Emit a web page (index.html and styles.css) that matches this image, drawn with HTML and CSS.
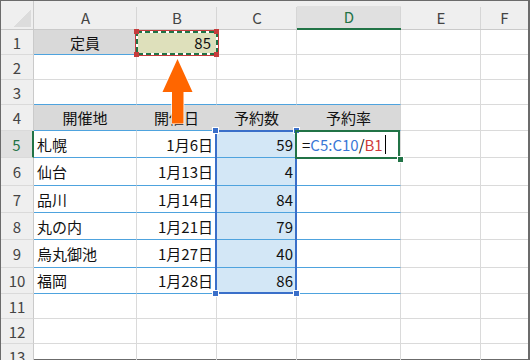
FILE: index.html
```html
<!DOCTYPE html>
<html lang="ja">
<head>
<meta charset="utf-8">
<title>予約率</title>
<link rel="stylesheet" href="styles.css">
</head>
<body>
<div class="frame">
  <div class="sheet">
    <!-- column headers -->
    <div class="corner"></div>
    <div class="ch">A</div>
    <div class="ch">B</div>
    <div class="ch">C</div>
    <div class="ch ch-act">D</div>
    <div class="ch">E</div>
    <div class="ch last">F</div>

    <!-- row 1 -->
    <div class="rh">1</div>
    <div class="c m fill-gray line">定員</div>
    <div class="c r fill-olive">85</div>
    <div class="c"></div><div class="c"></div><div class="c"></div><div class="c last"></div>

    <!-- row 2 -->
    <div class="rh">2</div>
    <div class="c"></div><div class="c"></div><div class="c"></div><div class="c"></div><div class="c"></div><div class="c last"></div>

    <!-- row 3 -->
    <div class="rh">3</div>
    <div class="c line"></div><div class="c line"></div><div class="c line"></div><div class="c line"></div><div class="c"></div><div class="c last"></div>

    <!-- row 4: table header -->
    <div class="rh">4</div>
    <div class="c m fill-gray line">開催地</div>
    <div class="c m fill-gray line">開催日</div>
    <div class="c m fill-gray line">予約数</div>
    <div class="c m fill-gray line keep">予約率</div>
    <div class="c"></div><div class="c last"></div>

    <!-- row 5 -->
    <div class="rh rh-act">5</div>
    <div class="c line">札幌</div>
    <div class="c r line">1月6日</div>
    <div class="c r line fill-blue">59</div>
    <div class="c line edit">=<span class="ref-c">C5:C10</span>/<span class="ref-b">B1</span><span class="caret"></span></div>
    <div class="c"></div><div class="c last"></div>

    <!-- row 6 -->
    <div class="rh">6</div>
    <div class="c line">仙台</div>
    <div class="c r line">1月13日</div>
    <div class="c r line fill-blue">4</div>
    <div class="c line"></div>
    <div class="c"></div><div class="c last"></div>

    <!-- row 7 -->
    <div class="rh">7</div>
    <div class="c line">品川</div>
    <div class="c r line">1月14日</div>
    <div class="c r line fill-blue">84</div>
    <div class="c line"></div>
    <div class="c"></div><div class="c last"></div>

    <!-- row 8 -->
    <div class="rh">8</div>
    <div class="c line">丸の内</div>
    <div class="c r line">1月21日</div>
    <div class="c r line fill-blue">79</div>
    <div class="c line"></div>
    <div class="c"></div><div class="c last"></div>

    <!-- row 9 -->
    <div class="rh">9</div>
    <div class="c line">烏丸御池</div>
    <div class="c r line">1月27日</div>
    <div class="c r line fill-blue">40</div>
    <div class="c line"></div>
    <div class="c"></div><div class="c last"></div>

    <!-- row 10 -->
    <div class="rh">10</div>
    <div class="c line">福岡</div>
    <div class="c r line">1月28日</div>
    <div class="c r line fill-blue">86</div>
    <div class="c line"></div>
    <div class="c"></div><div class="c last"></div>

    <!-- row 11 -->
    <div class="rh">11</div>
    <div class="c"></div><div class="c"></div><div class="c"></div><div class="c"></div><div class="c"></div><div class="c last"></div>

    <!-- row 12 -->
    <div class="rh">12</div>
    <div class="c"></div><div class="c"></div><div class="c"></div><div class="c"></div><div class="c"></div><div class="c last"></div>

    <!-- row 13 (runs past the window edge) -->
    <div class="rh end">13</div>
    <div class="c end"></div><div class="c end"></div><div class="c end"></div><div class="c end"></div><div class="c end"></div><div class="c end last"></div>

    <!-- B1: copied reference (marching ants + red range marker) -->
    <svg class="ants" width="88" height="31" viewBox="0 0 88 31">
      <rect x="2.5" y="2.5" width="83" height="25" fill="none" stroke="#c63c3c" stroke-width="1"/>
      <rect x="4" y="4" width="80" height="22" fill="none" stroke="#ffffff" stroke-width="2"/>
      <rect x="4" y="4" width="80" height="22" fill="none" stroke="#217346" stroke-width="2" stroke-dasharray="5 3"/>
      <rect x="1" y="1" width="5" height="5" fill="#c63c3c"/>
      <rect x="81" y="1" width="5" height="5" fill="#c63c3c"/>
      <rect x="1" y="24" width="5" height="5" fill="#c63c3c"/>
      <rect x="81" y="24" width="5" height="5" fill="#c63c3c"/>
    </svg>

    <!-- C5:C10 reference range -->
    <div class="range">
      <span class="knob tl"></span><span class="knob tr"></span>
      <span class="knob bl"></span><span class="knob br"></span>
    </div>

    <!-- active cell D5 -->
    <div class="active"><span class="handle"></span></div>

    <!-- callout arrow pointing at B1 -->
    <svg class="arrow" width="36" height="72" viewBox="0 0 36 72">
      <polygon points="17.5,3 32.5,36 23.5,36 23.5,67.5 12,67.5 12,36 2.5,36"
               fill="#ff6600" stroke="#ffffff" stroke-width="1.5" stroke-linejoin="miter" paint-order="stroke"/>
    </svg>
  </div>
</div>
</body>
</html>
```

FILE: styles.css
```css
* {
  box-sizing: border-box;
  margin: 0;
  padding: 0;
}

body {
  width: 530px;
  height: 360px;
  overflow: hidden;
  background: #ffffff;
  font-family: "Noto Sans CJK JP", "Noto Sans", sans-serif;
}

.frame {
  width: 530px;
  height: 360px;
  border: 1px solid #6b6b6b;
  border-right-width: 2px;
}

.sheet {
  position: relative;
  height: 100%;
  display: grid;
  grid-template-columns: 33px 103px 80px 80px 104px 80px 1fr;
  grid-template-rows: 29px 25px 25px 25px 26px 27px 28px 27px 27px 28px 26px 25px 25px 1fr;
  font-size: 15px;
  color: #111111;
}

/* header strip */
.corner {
  background:
    linear-gradient(to bottom right, transparent 50%, #dcdcdc 50%) no-repeat 12px 8px / 18px 18px,
    #efefef;
  border-right: 1px solid #cacaca;
  border-bottom: 1px solid #cacaca;
}

.ch {
  display: flex;
  align-items: center;
  justify-content: center;
  padding-top: 4px;
  color: #444444;
  line-height: 1;
  background:
    linear-gradient(#d6d6d6, #d6d6d6) no-repeat right bottom / 1px calc(100% - 6px),
    #efefef;
  border-bottom: 1px solid #cacaca;
}

.ch.last {
  background: #efefef;
}

.ch-act {
  color: #217346;
  background:
    linear-gradient(#d6d6d6, #d6d6d6) no-repeat right bottom / 1px calc(100% - 6px),
    linear-gradient(#e0e0e0, #e0e0e0) no-repeat left bottom / 100% calc(100% - 5px),
    #efefef;
  border-bottom: 2px solid #217346;
}

.rh {
  display: flex;
  align-items: center;
  justify-content: center;
  color: #444444;
  line-height: 1;
  background: #efefef;
  border-right: 1px solid #cacaca;
  border-bottom: 1px solid #dadada;
}

.rh.end {
  align-items: flex-start;
  padding-top: 5px;
}

.rh-act {
  color: #217346;
  background: #e0e0e0;
  border-right: 2px solid #217346;
}

/* cells */
.c {
  display: flex;
  align-items: center;
  padding: 0 3px;
  line-height: 1;
  white-space: nowrap;
  overflow: hidden;
  border-right: 1px solid #dadada;
  border-bottom: 1px solid #dadada;
}

.c.last {
  border-right: none;
}

.end {
  border-bottom: none;
}

.r {
  justify-content: flex-end;
}

.m {
  justify-content: center;
}

.line {
  border-bottom-color: #4ea3de;
}

.fill-gray {
  background: #d9d9d9;
  border-right-color: transparent;
}

.fill-gray.keep {
  border-right-color: #d4d4d4;
}

.fill-olive {
  background: #dee0bb;
  padding-right: 5px;
}

.fill-blue {
  background: #d3e7f6;
}

/* formula being typed in D5 */
.edit {
  padding-left: 5px;
}

.ref-c {
  color: #3a78d6;
}

.ref-b {
  color: #d03a3a;
}

.caret {
  display: inline-block;
  width: 1px;
  height: 19px;
  margin-left: 2px;
  background: #000000;
}

/* overlays drawn on top of the grid */
.ants {
  position: absolute;
  left: 132px;
  top: 27px;
}

.range {
  position: absolute;
  left: 214px;
  top: 129px;
  width: 82px;
  height: 164px;
  border: 2px solid #3a6fc9;
}

.knob {
  position: absolute;
  width: 7px;
  height: 7px;
  background: #3a6fc9;
  border: 1px solid #ffffff;
}

.knob.tl { left: -5px; top: -5px; }
.knob.tr { right: -5px; top: -5px; }
.knob.bl { left: -5px; bottom: -5px; }
.knob.br { right: -5px; bottom: -5px; }

.active {
  position: absolute;
  left: 294px;
  top: 129px;
  width: 105px;
  height: 29px;
  border: 2px solid #217346;
}

.handle {
  position: absolute;
  right: -6px;
  bottom: -6px;
  width: 7px;
  height: 7px;
  background: #217346;
  border: 1px solid #ffffff;
}

.arrow {
  position: absolute;
  left: 159px;
  top: 55px;
}
```
